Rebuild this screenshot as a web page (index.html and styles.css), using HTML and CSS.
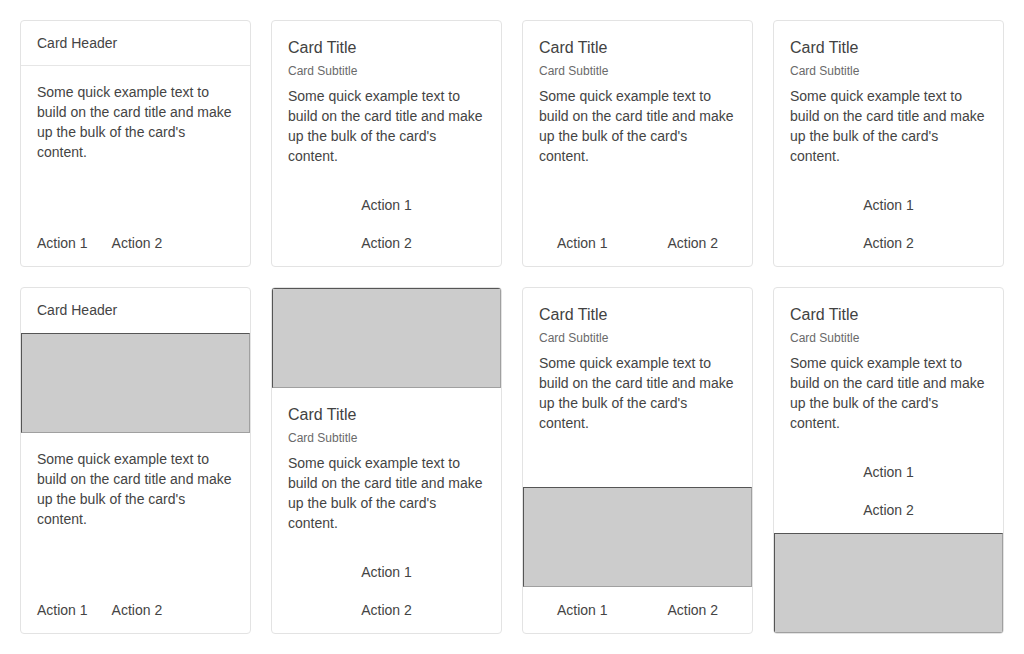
FILE: index.html
```html
<!DOCTYPE html>
<html lang="en">
<head>
<meta charset="utf-8">
<title>Cards</title>
<link rel="stylesheet" href="styles.css">
</head>
<body>
<div class="grid">
  <div class="card">
    <div class="card-header">Card Header</div>
    <div class="card-body grow">
      <p class="card-text">Some quick example text to build on the card title and make up the bulk of the card's content.</p>
    </div>
    <div class="card-actions">
      <button class="btn">Action 1</button>
      <button class="btn">Action 2</button>
    </div>
  </div>

  <div class="card">
    <div class="card-body grow">
      <div class="card-title">Card Title</div>
      <div class="card-subtitle">Card Subtitle</div>
      <p class="card-text">Some quick example text to build on the card title and make up the bulk of the card's content.</p>
    </div>
    <div class="card-actions vertical">
      <button class="btn">Action 1</button>
      <button class="btn">Action 2</button>
    </div>
  </div>

  <div class="card">
    <div class="card-body grow">
      <div class="card-title">Card Title</div>
      <div class="card-subtitle">Card Subtitle</div>
      <p class="card-text">Some quick example text to build on the card title and make up the bulk of the card's content.</p>
    </div>
    <div class="card-actions full">
      <button class="btn">Action 1</button>
      <button class="btn">Action 2</button>
    </div>
  </div>

  <div class="card">
    <div class="card-body grow">
      <div class="card-title">Card Title</div>
      <div class="card-subtitle">Card Subtitle</div>
      <p class="card-text">Some quick example text to build on the card title and make up the bulk of the card's content.</p>
    </div>
    <div class="card-actions vertical">
      <button class="btn">Action 1</button>
      <button class="btn">Action 2</button>
    </div>
  </div>

  <div class="card">
    <div class="card-header flush">Card Header</div>
    <div class="card-img"></div>
    <div class="card-body grow">
      <p class="card-text">Some quick example text to build on the card title and make up the bulk of the card's content.</p>
    </div>
    <div class="card-actions">
      <button class="btn">Action 1</button>
      <button class="btn">Action 2</button>
    </div>
  </div>

  <div class="card">
    <div class="card-img"></div>
    <div class="card-body grow">
      <div class="card-title">Card Title</div>
      <div class="card-subtitle">Card Subtitle</div>
      <p class="card-text">Some quick example text to build on the card title and make up the bulk of the card's content.</p>
    </div>
    <div class="card-actions vertical">
      <button class="btn">Action 1</button>
      <button class="btn">Action 2</button>
    </div>
  </div>

  <div class="card">
    <div class="card-body grow">
      <div class="card-title">Card Title</div>
      <div class="card-subtitle">Card Subtitle</div>
      <p class="card-text">Some quick example text to build on the card title and make up the bulk of the card's content.</p>
    </div>
    <div class="card-img"></div>
    <div class="card-actions full">
      <button class="btn">Action 1</button>
      <button class="btn">Action 2</button>
    </div>
  </div>

  <div class="card">
    <div class="card-body grow">
      <div class="card-title">Card Title</div>
      <div class="card-subtitle">Card Subtitle</div>
      <p class="card-text">Some quick example text to build on the card title and make up the bulk of the card's content.</p>
    </div>
    <div class="card-actions vertical">
      <button class="btn">Action 1</button>
      <button class="btn">Action 2</button>
    </div>
    <div class="card-img"></div>
  </div>
</div>
</body>
</html>
```

FILE: styles.css
```css
* { box-sizing: border-box; }

html, body {
  margin: 0;
  padding: 0;
  background: #ffffff;
}

body {
  font-family: "Liberation Sans", Arial, sans-serif;
  font-size: 14px;
  line-height: 20px;
  color: #444444;
}

.grid {
  display: grid;
  grid-template-columns: repeat(4, 1fr);
  gap: 20px;
  padding: 20px;
}

.card {
  display: flex;
  flex-direction: column;
  border: 1px solid #e3e3e3;
  border-radius: 4px;
  overflow: hidden;
  background: #fff;
}

.card-header {
  padding: 12px 16px;
  border-bottom: 1px solid #e6e6e6;
  color: #444;
  height: 45px;
  flex: none;
}

.card-header.flush {
  border-bottom: none;
}

.card-body {
  padding: 16px;
}

.grow { flex: 1 1 auto; }

.card-title {
  font-size: 16px;
  line-height: 20px;
  color: #424242;
  margin-top: 1px;
}

.card-subtitle {
  font-size: 12px;
  line-height: 16px;
  color: #6a6a6a;
  margin-top: 5px;
}

.card-text {
  margin: 7px 0 0 0;
}

.card-body > .card-text:first-child {
  margin-top: 0;
}

.card-img {
  flex: none;
  height: 100px;
  background: #cccccc;
  border-style: solid;
  border-width: 1px;
  border-color: #555555 #a0a0a0 #a0a0a0 #555555;
}

.card-actions {
  display: flex;
  gap: 8px;
  padding: 8px;
  flex: none;
}

.card-actions.vertical {
  flex-direction: column;
}

.card-actions.full .btn {
  flex: 1 1 0;
}

.btn {
  font-family: inherit;
  font-size: 14px;
  line-height: 20px;
  color: #444444;
  background: transparent;
  border: none;
  height: 30px;
  padding: 0 8px;
  margin: 0;
  cursor: pointer;
}
```
